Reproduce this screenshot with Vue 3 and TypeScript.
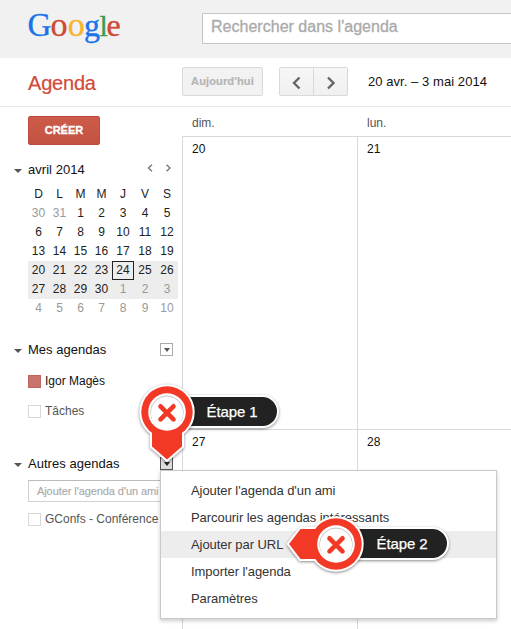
<script setup lang="ts">
interface Day { n: number; out?: boolean; today?: boolean }
interface Pin { cls: string; label: string; tail: string; cx: number; cy: number }

const logo = [
  { c: 'G', x: -0.5, size: 33, color: '#1a73e8' },
  { c: 'o', x: 22.6, size: 34, color: '#cb4a38' },
  { c: 'o', x: 39.8, size: 34, color: '#f6b52c' },
  { c: 'g', x: 56, size: 32, color: '#1a73e8' },
  { c: 'l', x: 71.6, size: 30, color: '#3f9b50' },
  { c: 'e', x: 78.6, size: 32, color: '#cb4a38' },
]
const letters: string[] = ['D', 'L', 'M', 'M', 'J', 'V', 'S']
const days: Day[] = [
  { n: 30, out: true }, { n: 31, out: true },
  ...Array.from({ length: 30 }, (_, i): Day => ({ n: i + 1, today: i + 1 === 24 })),
  ...Array.from({ length: 10 }, (_, i): Day => ({ n: i + 1, out: true })),
]
const weeks: Day[][] = Array.from({ length: 6 }, (_, i) => days.slice(i * 7, i * 7 + 7))
const columns = [
  { name: 'dim.', dates: [20, 27] },
  { name: 'lun.', dates: [21, 28] },
]
const menu: string[] = [
  "Ajouter l'agenda d'un ami",
  'Parcourir les agendas intéressants',
  'Ajouter par URL',
  "Importer l'agenda",
  'Paramètres',
]
const pins: Pin[] = [
  { cls: 'pin-one', label: 'Étape 1', cx: 30, cy: 30, tail: 'M15 40V64.5L30 77.5L45 64.5V40Z' },
  { cls: 'pin-two', label: 'Étape 2', cx: 50, cy: 30, tail: 'M40 15H14.5L3 30L14.5 45H40Z' },
]
</script>

<template>
  <div class="page">
    <header class="top">
      <svg class="logo" width="100" height="45" viewBox="0 0 100 45">
        <text y="30.3"><tspan v-for="(l, i) in logo" :key="i" :x="l.x" :font-size="l.size" :fill="l.color" :stroke="l.color">{{ l.c }}</tspan></text>
      </svg>
      <div class="search">Rechercher dans l'agenda</div>
    </header>

    <div class="toolbar">
      <div class="title">Agenda</div>
      <div class="btn today-btn">Aujourd'hui</div>
      <div class="btn nav">
        <span><svg width="10" height="14" viewBox="0 0 10 14"><path d="M7.5 1.5L2 7L7.5 12.5" /></svg></span>
        <span><svg width="10" height="14" viewBox="0 0 10 14"><path d="M2 1.5L7.5 7L2 12.5" /></svg></span>
      </div>
      <div class="range">20 avr. – 3 mai 2014</div>
    </div>

    <div class="body">
      <aside class="side">
        <div class="create">CRÉER</div>
        <div class="heading month">
          <i class="tri"></i><span>avril 2014</span>
          <svg class="arrows" width="25" height="8" viewBox="0 0 25 8"><path d="M5 .8L1.5 4L5 7.2M19.5 .8L23 4L19.5 7.2" /></svg>
        </div>
        <div class="mini">
          <div class="week"><span v-for="(l, i) in letters" :key="i">{{ l }}</span></div>
          <div v-for="(w, i) in weeks" :key="i" class="week" :class="{ current: i === 3 || i === 4 }">
            <span v-for="(d, j) in w" :key="j" :class="{ out: d.out, today: d.today }">{{ d.n }}</span>
          </div>
        </div>
        <div class="heading mine"><i class="tri"></i><span>Mes agendas</span><b class="drop"><i class="tri"></i></b></div>
        <div class="entry igor"><i class="box filled"></i>Igor Magès</div>
        <div class="entry tasks"><i class="box"></i>Tâches</div>
        <div class="heading others"><i class="tri"></i><span>Autres agendas</span><b class="drop open"><i class="tri"></i></b></div>
        <div class="friend">Ajouter l'agenda d'un ami</div>
        <div class="entry confs"><i class="box"></i>GConfs - Conférence</div>
      </aside>
      <main class="grid">
        <div v-for="c in columns" :key="c.name" class="col">
          <div class="day-name">{{ c.name }}</div>
          <div v-for="d in c.dates" :key="d" class="cell">{{ d }}</div>
        </div>
      </main>
    </div>

    <div class="menu">
      <div v-for="(m, i) in menu" :key="m" class="item" :class="{ active: i === 2 }">{{ m }}</div>
    </div>

    <div v-for="p in pins" :key="p.cls" class="pin" :class="p.cls">
      <div class="pill">{{ p.label }}</div>
      <svg width="90" height="90" viewBox="0 0 90 90">
        <g class="halo"><path :d="p.tail" /><circle :cx="p.cx" :cy="p.cy" r="25.7" /></g>
        <g fill="#f23926"><path :d="p.tail" /><circle :cx="p.cx" :cy="p.cy" r="25.7" /></g>
        <circle :cx="p.cx" :cy="p.cy" r="18.8" fill="#fff" />
        <circle :cx="p.cx" :cy="p.cy + 0.3" r="16.3" fill="none" stroke="#c4c4c4" stroke-width="1" />
        <circle :cx="p.cx" :cy="p.cy + 1.2" r="16" fill="#fff" />
        <path class="cross" :transform="`translate(${p.cx} ${p.cy + 0.8})`" d="M-6.5-6.5L6.5 6.5M6.5-6.5L-6.5 6.5" />
      </svg>
    </div>
  </div>
</template>

<style>
body { margin: 0; background: #fff; }
</style>

<style scoped>
.page { position: relative; width: 511px; height: 629px; overflow: hidden; font-family: "Liberation Sans", Arial, sans-serif; font-size: 13px; color: #222; background: #fff; }
.page * { box-sizing: border-box; }
.top { display: flex; height: 58px; background: #f1f1f1; padding: 6px 0 0 28px; }
.logo { flex: none; width: 100px; margin-right: 74px; overflow: visible; font-family: "Liberation Serif", serif; stroke-width: .35; }
.search { flex: none; width: 330px; height: 31px; margin-top: 7px; padding-left: 8px; border: 1px solid #c6c6c6; background: #fff; color: #aaa; font-size: 16px; line-height: 26px; letter-spacing: .02px; -webkit-text-stroke: .3px #aaa; }
.toolbar { display: flex; height: 49px; padding: 9px 0 0 28px; border-bottom: 1px solid #e8e8e8; }
.title { width: 154px; color: #d14b3a; font-size: 20px; line-height: 32px; letter-spacing: -.2px; -webkit-text-stroke: .2px #d14b3a; }
.btn { height: 29px; border: 1px solid #d9d9d9; border-radius: 2px; background: #f2f2f2; }
.today-btn { width: 81px; text-align: center; color: #b5b5b5; font-size: 11px; font-weight: bold; line-height: 27px; letter-spacing: .15px; -webkit-text-stroke: .2px #b5b5b5; }
.nav { display: flex; width: 69px; margin-left: 16px; background: linear-gradient(#f6f6f6, #f0f0f0); }
.nav span { display: flex; flex: 1; align-items: center; justify-content: center; padding-top: 2px; }
.nav span + span { border-left: 1px solid #d9d9d9; }
.nav path { fill: none; stroke: #666; stroke-width: 2.4; }
.range { margin-left: 20px; color: #111; line-height: 29px; letter-spacing: .06px; white-space: nowrap; }
.body { display: flex; height: 522px; }
.side { display: flex; flex-direction: column; flex: none; width: 182px; padding: 9px 0 0 15px; }
.side > * { flex-shrink: 0; }
.create { width: 72px; height: 29px; margin-left: 13px; border: 1px solid #bd4b3c; border-radius: 2px; background: linear-gradient(#cc5b4a, #c45241); color: #fff; font-size: 11px; font-weight: bold; line-height: 27px; text-align: center; -webkit-text-stroke: .3px #fff; }
.heading { display: flex; align-items: center; height: 16px; color: #111; white-space: nowrap; }
.heading span { margin-left: 6px; letter-spacing: .03px; }
.tri { flex: none; width: 0; height: 0; border: solid transparent; border-width: 4px 3.5px 0; border-top-color: #555; margin-top: 3px; }
.heading > .tri { border-width: 4px 4px 0; margin-left: -1px; border-top-color: #555; }
.month { margin-top: 16px; }
.arrows path { fill: none; stroke: #777; stroke-width: 1.4; }
.month .arrows { margin: -3px 10px 0 auto; }
.mini { width: 150px; margin: 8px 0 0 13px; font-size: 12px; color: #222; }
.week { display: grid; grid-template-columns: 21px 21px 21px 21px 22px 22px 22px; height: 19px; line-height: 19px; text-align: center; }
.week.current { background: #ededed; }
.week .out { color: #999; }
.today { line-height: 17px; border: 1px solid #222; }
.mine { margin-top: 23px; }
.drop { display: flex; justify-content: center; width: 13px; height: 13px; margin-left: auto; margin-right: 9px; border: 1px solid #aaa; }
.drop .tri { margin-top: 4px; }
.drop.open { border-color: #555; background: #ddd; }
.drop.open .tri { border-top-color: #222; }
.entry { display: flex; align-items: center; height: 16px; padding-left: 13px; font-size: 12px; color: #555; white-space: nowrap; overflow: hidden; }
.box { flex: none; width: 13px; height: 13px; margin-right: 4px; border: 1px solid #d8d8d8; }
.filled { background: #c8746c; border-color: #c0655c; }
.igor { margin-top: 16px; color: #111; }
.tasks { margin-top: 14px; }
.others { margin-top: 36px; }
.friend { width: 150px; height: 22px; margin: 9px 0 0 13px; padding-left: 8px; border: 1px solid #d2d2d2; border-top-color: #bbb; color: #aaa; font-size: 11px; line-height: 20px; letter-spacing: -.08px; white-space: nowrap; -webkit-text-stroke: .15px #aaa; }
.confs { margin-top: 9px; }
.grid { display: flex; flex: none; width: 350px; }
.col { width: 175px; height: 522px; overflow: hidden; }
.day-name { height: 29px; padding-left: 10px; color: #555; font-size: 12px; line-height: 32px; }
.cell { height: 293px; padding: 4px 0 0 9px; border: solid #d9d9d9; border-width: 1px 0 0 1px; color: #111; font-size: 12px; line-height: 17px; }
.menu { position: absolute; left: 160px; top: 470px; width: 337px; height: 149px; padding-top: 6px; border: 1px solid #c9c9c9; background: #fff; box-shadow: 0 2px 4px rgba(0, 0, 0, .2); }
.item { height: 27px; padding-left: 30px; line-height: 27px; letter-spacing: -.06px; color: #333; }
.item.active { background: #ededed; }
.pin { position: absolute; }
.pin svg { position: relative; display: block; overflow: visible; }
.pin-one { left: 137px; top: 382px; }
.pin-two { left: 286px; top: 514px; }
.halo { fill: #fff; stroke: #fff; stroke-width: 4; filter: drop-shadow(0 1.5px 1.5px rgba(0, 0, 0, .45)); }
.cross { fill: none; stroke: #f23926; stroke-width: 4.6; stroke-linecap: round; }
.pill { position: absolute; top: 12.5px; left: 30px; width: 111.5px; height: 33.5px; padding-left: 37.5px; border: 2px solid #fff; border-radius: 17px; background: #222; color: #fff; font-size: 15px; line-height: 29px; letter-spacing: -.1px; white-space: nowrap; box-shadow: 0 1px 3px rgba(0, 0, 0, .45); -webkit-text-stroke: .25px #fff; }
.pin-two .pill { left: 51px; }
</style>
